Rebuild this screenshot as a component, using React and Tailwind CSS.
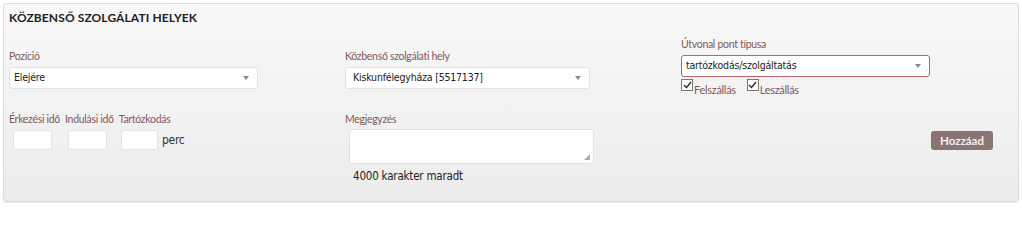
function Select({ value, className = "" }) {
  return (
    <div
      className={`flex h-[22px] items-center justify-between rounded-[3px] border bg-white pl-[4px] pr-[8px] ${className}`}
    >
      <span className="text-[10.5px] text-[#222] [font-family:'DejaVu_Sans_Condensed','DejaVu_Sans',sans-serif] [font-stretch:condensed] tracking-[-0.2px]">
        {value}
      </span>
      <span className="h-0 w-0 border-x-[3.5px] border-t-[4px] border-x-transparent border-t-[#888]" />
    </div>
  );
}

function Label({ children, className = "" }) {
  return (
    <div
      className={`text-[10.5px] leading-[12px] text-[#80595d] [font-family:Lato,sans-serif] tracking-[-0.3px] ${className}`}
    >
      {children}
    </div>
  );
}

function Check({ label }) {
  return (
    <label className="flex items-start">
      <span className="flex h-[12px] w-[12px] items-center justify-center border border-[#777] bg-white">
        <svg width="9" height="8" viewBox="0 0 9 8">
          <path d="M1 4 L3.5 6.5 L8 1" stroke="#222" strokeWidth="1.3" fill="none" />
        </svg>
      </span>
      <span className="ml-[1px] mt-[5px] text-[11px] leading-[12px] text-[#80595d] [font-family:Lato,sans-serif] tracking-[-0.3px]">
        {label}
      </span>
    </label>
  );
}

function SmallInput({ w }) {
  return <div className={`h-[20px] ${w} rounded-[2px] border border-[#e3e3e3] bg-white`} />;
}

export default function App() {
  return (
    <div className="h-[209px] w-[1022px] bg-white pl-[3px] pr-[3px] pt-[3px]">
      <div className="h-[199px] rounded-[3px] border border-[#dcdcdc] bg-gradient-to-b from-[#f8f8f8] to-[#ececec] px-[5px] pt-[6px] shadow-[0_1px_1px_rgba(0,0,0,0.08)]">
        <h2 className="text-[12px] font-bold leading-[16px] text-[#222] [font-family:Lato,sans-serif] tracking-[0.1px]">
          KÖZBENSŐ SZOLGÁLATI HELYEK
        </h2>

        <div className="mt-[12px] grid grid-cols-[336px_336px_1fr]">
          <div className="pt-[12px]">
            <Label>Pozíció</Label>
            <Select value="Elejére" className="mt-[5px] w-[249px] border-[#e2e2e2]" />
          </div>
          <div className="pt-[12px]">
            <Label>Közbenső szolgálati hely</Label>
            <Select
              value="Kiskunfélegyháza [5517137]"
              className="mt-[5px] w-[245px] border-[#e2e2e2] pl-[7px]"
            />
          </div>
          <div>
            <Label>Útvonal pont típusa</Label>
            <Select
              value="tartózkodás/szolgáltatás"
              className="mt-[5px] w-[249px] border-[#b9646c]"
            />
            <div className="mt-[2px] flex gap-[11px]">
              <Check label="Felszállás" />
              <Check label="Leszállás" />
            </div>
          </div>
        </div>

        <div className="mt-[17px] grid grid-cols-[336px_336px_1fr]">
          <div>
            <div className="flex gap-[5px]">
              <Label>Érkezési idő</Label>
              <Label>Indulási idő</Label>
              <Label>Tartózkodás</Label>
            </div>
            <div className="mt-[5px] flex items-center pl-[4px]">
              <SmallInput w="w-[39px]" />
              <div className="ml-[16px]">
                <SmallInput w="w-[39px]" />
              </div>
              <div className="ml-[14px]">
                <SmallInput w="w-[37px]" />
              </div>
              <span className="ml-[4px] text-[12px] text-[#333] [font-family:'DejaVu_Sans_Condensed','DejaVu_Sans',sans-serif] [font-stretch:condensed] tracking-[-0.3px]">
                perc
              </span>
            </div>
          </div>
          <div>
            <Label>Megjegyzés</Label>
            <div className="relative ml-[4px] mt-[4px] h-[35px] w-[245px] rounded-[3px] border border-[#e2e2e2] bg-white">
              <svg className="absolute bottom-[3px] right-[3px]" width="6" height="6" viewBox="0 0 6 6">
                <path d="M6 0 L6 6 L0 6 Z" fill="#aaa" />
              </svg>
            </div>
            <div className="ml-[8px] mt-[4px] text-[11.5px] text-[#222] [font-family:'DejaVu_Sans_Condensed','DejaVu_Sans',sans-serif] [font-stretch:condensed] tracking-[-0.2px]">
              4000 karakter maradt
            </div>
          </div>
          <div className="pl-[250px] pt-[14px]">
            <button className="h-[19px] w-[62px] rounded-[3px] bg-[#8b7574] text-[11.5px] font-bold text-[#f4f0f0] [font-family:Lato,sans-serif]">
              Hozzáad
            </button>
          </div>
        </div>
      </div>
    </div>
  );
}
